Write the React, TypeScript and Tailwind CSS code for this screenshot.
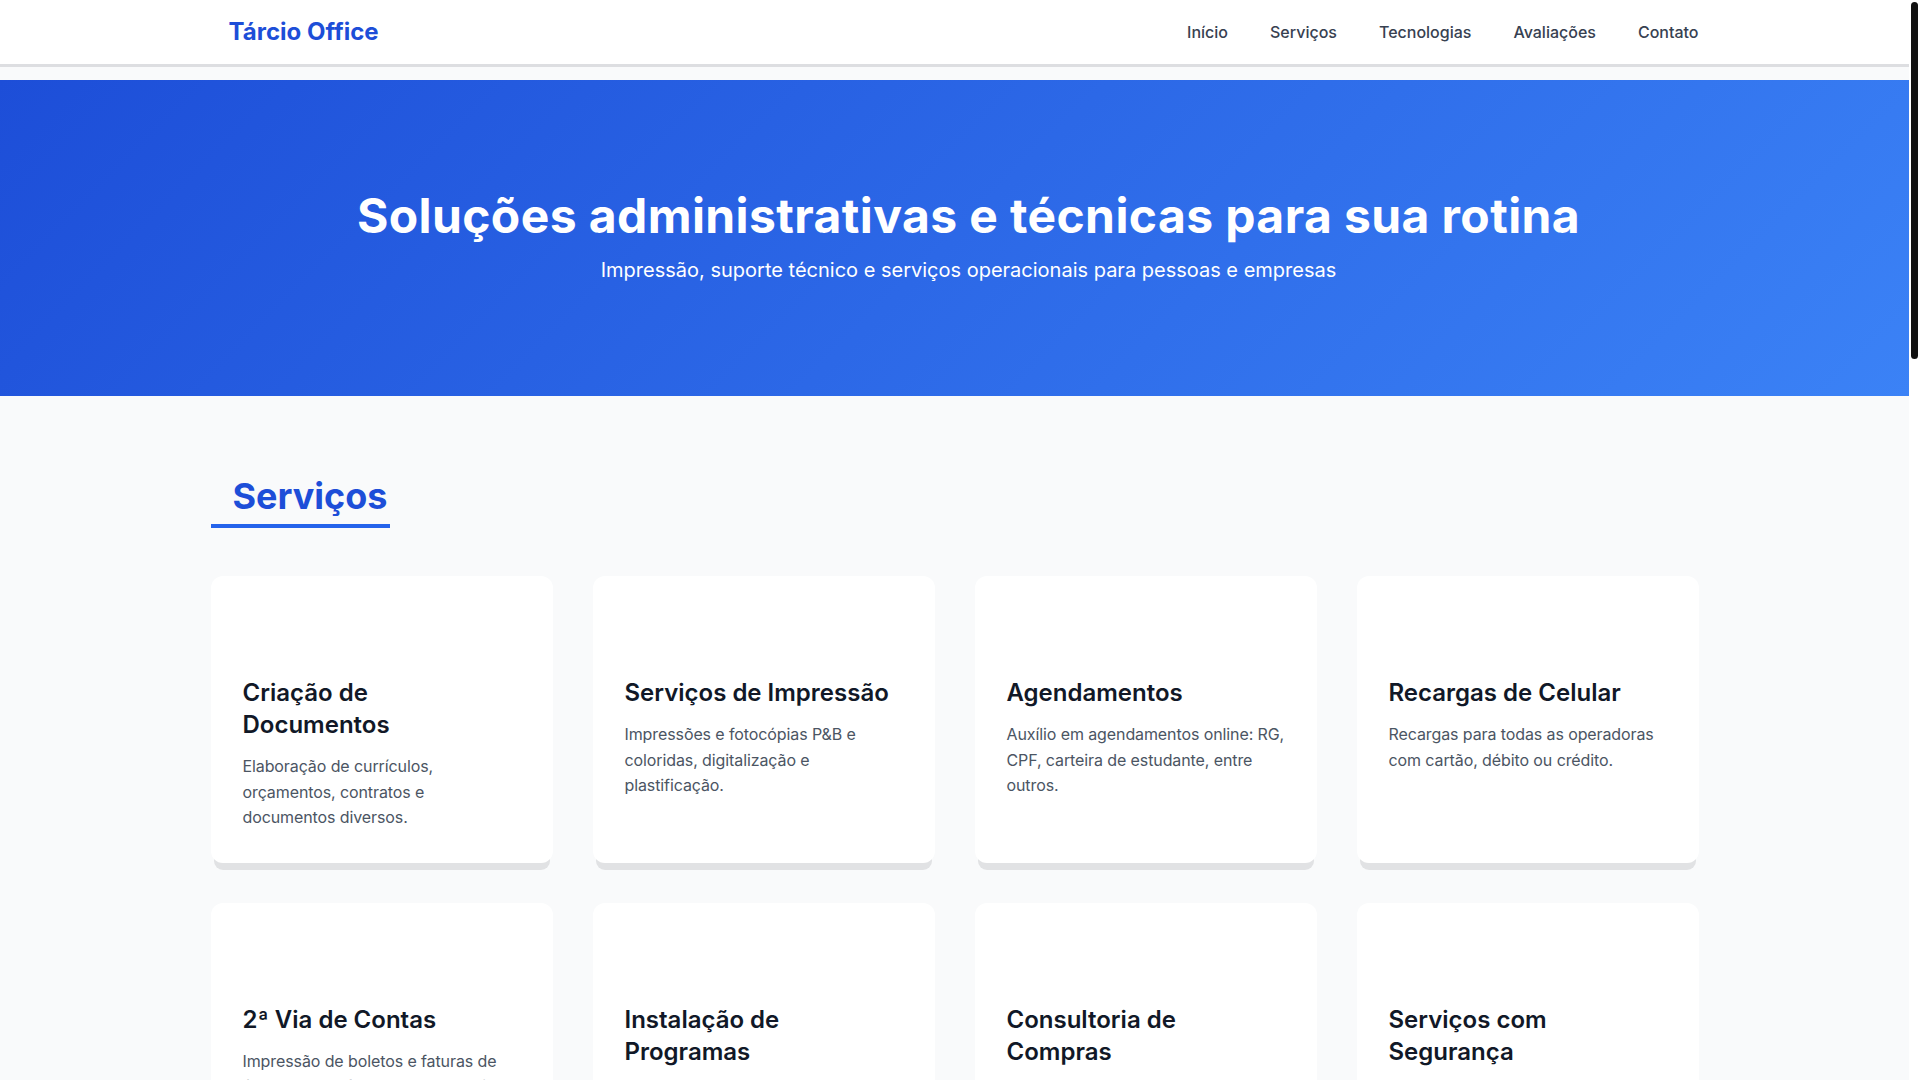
import React from 'react';

const services = [
    { title: 'Criação de Documentos', text: 'Elaboração de currículos, orçamentos, contratos e documentos diversos.' },
    { title: 'Serviços de Impressão', text: 'Impressões e fotocópias P&B e coloridas, digitalização e plastificação.' },
    { title: 'Agendamentos', text: 'Auxílio em agendamentos online: RG, CPF, carteira de estudante, entre outros.' },
    { title: 'Recargas de Celular', text: 'Recargas para todas as operadoras com cartão, débito ou crédito.' },
    { title: '2ª Via de Contas', text: 'Impressão de boletos e faturas de água, luz, telefone e outros serviços.' },
    { title: 'Instalação de Programas', text: 'Instalação e configuração de programas, drivers e sistemas operacionais.' },
    { title: 'Consultoria de Compras', text: 'Ajuda na escolha de computadores, celulares e acessórios ideais.' },
    { title: 'Serviços com Segurança', text: 'Backup de arquivos, remoção de vírus e proteção dos seus dados.' },
];

const techs = ['Windows', 'Microsoft Office', 'Google Workspace', 'Impressoras', 'Redes Wi-Fi', 'Android'];

const reviews = [
    { name: 'Maria S.', text: 'Atendimento rápido e muito atencioso. Resolveram meu problema no mesmo dia.' },
    { name: 'João P.', text: 'Ótimo lugar para imprimir documentos e fazer currículos. Recomendo!' },
    { name: 'Ana L.', text: 'Me ajudaram com o agendamento do RG e foi tudo muito fácil.' },
];

function SectionTitle({ children }: { children: React.ReactNode }) {
    return (
        <h2 className="mb-12 inline-block border-b-4 border-[#2563eb] pb-2 pl-[22px] pr-0.5 text-4xl font-bold text-[#1d4ed8]">
            {children}
        </h2>
    );
}

function Card({ title, text }: { title: string; text: string }) {
    return (
        <div className="rounded-xl bg-white p-8 shadow-[0_10px_0_-3px_#e1e2e4]">
            <div className="mb-[21px] h-12" />
            <h3 className="mb-[13px] text-2xl font-semibold text-[#111827]">{title}</h3>
            <p className="text-base leading-[1.6] tracking-[-0.1px] text-[#4b5563]">{text}</p>
        </div>
    );
}

export default function App() {
    return (
        <div className="min-h-screen w-[1909px] bg-[#f9fafb] font-['Inter',sans-serif]">
            <header className="h-[67px] border-b-[3px] border-[#dddee1] bg-white">
                <div className="mx-auto flex h-16 w-[1488px] items-center justify-between">
                    <a className="pl-[18px] text-2xl font-bold text-[#1d4ed8]">Tárcio Office</a>
                    <nav className="flex gap-[42px] text-base font-medium text-[#374151]">
                        <a>Início</a>
                        <a>Serviços</a>
                        <a>Tecnologias</a>
                        <a>Avaliações</a>
                        <a>Contato</a>
                    </nav>
                </div>
            </header>

            <section className="mt-[13px] bg-[linear-gradient(135deg,#1d4ed8,#3b82f6)] py-28 pl-[28px] text-center text-white">
                <h1 className="mb-4 text-5xl font-bold tracking-[0.4px]">Soluções administrativas e técnicas para sua rotina</h1>
                <p className="text-xl">Impressão, suporte técnico e serviços operacionais para pessoas e empresas</p>
            </section>

            <section className="mx-auto w-[1488px] py-20">
                <SectionTitle>Serviços</SectionTitle>
                <div className="grid grid-cols-4 gap-10">
                    {services.map((s) => (
                        <Card key={s.title} title={s.title} text={s.text} />
                    ))}
                </div>
            </section>

            <section className="mx-auto w-[1488px] py-20">
                <SectionTitle>Tecnologias</SectionTitle>
                <div className="grid grid-cols-3 gap-10">
                    {techs.map((t) => (
                        <div key={t} className="rounded-xl bg-white p-8 text-xl font-semibold text-[#111827] shadow-[0_10px_0_-3px_#e1e2e4]">
                            {t}
                        </div>
                    ))}
                </div>
            </section>

            <section className="mx-auto w-[1488px] py-20">
                <SectionTitle>Avaliações</SectionTitle>
                <div className="grid grid-cols-3 gap-10">
                    {reviews.map((r) => (
                        <div key={r.name} className="rounded-xl bg-white p-8 shadow-[0_10px_0_-3px_#e1e2e4]">
                            <p className="mb-4 text-base leading-[1.6] text-[#4b5563]">"{r.text}"</p>
                            <p className="font-semibold text-[#111827]">{r.name}</p>
                        </div>
                    ))}
                </div>
            </section>

            <section className="mx-auto w-[1488px] py-20">
                <SectionTitle>Contato</SectionTitle>
                <div className="rounded-xl bg-white p-8 text-base leading-[1.6] text-[#4b5563] shadow-[0_10px_0_-3px_#e1e2e4]">
                    <p>WhatsApp: (00) 00000-0000</p>
                    <p>E-mail: contato@tarciooffice.com</p>
                    <p>Atendimento: segunda a sábado, das 8h às 18h</p>
                </div>
            </section>

            <footer className="bg-[#111827] py-10 text-center text-sm text-[#d1d5db]">© 2024 Tárcio Office. Todos os direitos reservados.</footer>

            {/* scrollbar thumb */}
            <div className="fixed right-[2px] top-[2px] h-[357px] w-[7px] rounded-full bg-[#111111]" />
        </div>
    );
}
